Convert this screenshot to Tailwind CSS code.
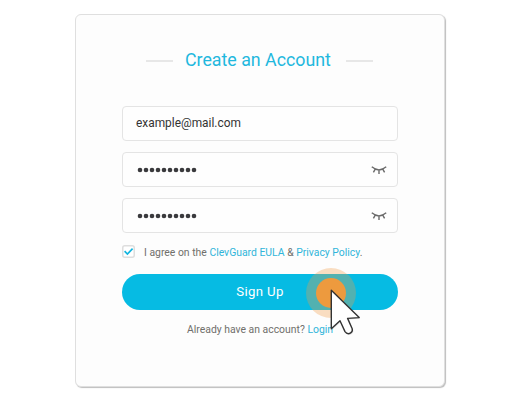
<!DOCTYPE html>
<html lang="en">
<head>
<meta charset="utf-8">
<title>Create an Account</title>
<script src="https://cdn.jsdelivr.net/npm/@tailwindcss/browser@4"></script>
</head>
<body class="bg-white w-[520px] h-[400px] overflow-hidden font-['Roboto',sans-serif]">
<main class="pt-[14px] pl-[75px]">
  <form class="relative w-[370px] h-[373px] rounded-[6px] border border-[#dfdfdf] bg-[#fdfdfd] shadow-[1px_1px_1px_0px_#bdbdbd] pl-[46px] pr-[46px] pt-[32px]">
    <div class="flex items-center h-[26px] pl-[24px]">
      <span class="w-[27px] h-[2px] bg-[#e7e7e7] mt-[2px]"></span>
      <h1 class="ml-[12px] text-[17.8px] leading-[26px] text-[#1fb8de] w-[146px] whitespace-nowrap">Create an Account</h1>
      <span class="ml-[15px] w-[27px] h-[2px] bg-[#e7e7e7] mt-[2px]"></span>
    </div>
    <div class="mt-[33px] flex flex-col gap-[11px]">
      <div class="h-[35px] rounded-[4px] border-[1.5px] border-[#e4e4e4] bg-[#fefefe] flex items-center pl-[13px] pb-px text-[11.9px] leading-[18px] text-[#333]">example@mail.com</div>
      <div class="h-[35px] rounded-[4px] border-[1.5px] border-[#e4e4e4] bg-[#fefefe] flex items-center justify-between pl-[14px] pr-[10px]">
        <svg width="60" height="6" viewBox="0 0 60 6" fill="#3a3a3d"><circle cx="3" cy="3" r="2.3"/><circle cx="9" cy="3" r="2.3"/><circle cx="15" cy="3" r="2.3"/><circle cx="21" cy="3" r="2.3"/><circle cx="27" cy="3" r="2.3"/><circle cx="33" cy="3" r="2.3"/><circle cx="39" cy="3" r="2.3"/><circle cx="45" cy="3" r="2.3"/><circle cx="51" cy="3" r="2.3"/><circle cx="57" cy="3" r="2.3"/></svg>
        <svg width="16" height="10" viewBox="0 0 16 10" fill="none" stroke="#6a6a6a" stroke-width="1.4"><path d="M.8 1.8Q8 8 15.2 1.8M4.1 4.3L2.4 7.3M11.9 4.3L13.6 7.3M8 5V9"/></svg>
      </div>
      <div class="h-[35px] rounded-[4px] border-[1.5px] border-[#e4e4e4] bg-[#fefefe] flex items-center justify-between pl-[14px] pr-[10px]">
        <svg width="60" height="6" viewBox="0 0 60 6" fill="#3a3a3d"><circle cx="3" cy="3" r="2.3"/><circle cx="9" cy="3" r="2.3"/><circle cx="15" cy="3" r="2.3"/><circle cx="21" cy="3" r="2.3"/><circle cx="27" cy="3" r="2.3"/><circle cx="33" cy="3" r="2.3"/><circle cx="39" cy="3" r="2.3"/><circle cx="45" cy="3" r="2.3"/><circle cx="51" cy="3" r="2.3"/><circle cx="57" cy="3" r="2.3"/></svg>
        <svg width="16" height="10" viewBox="0 0 16 10" fill="none" stroke="#6a6a6a" stroke-width="1.4"><path d="M.8 1.8Q8 8 15.2 1.8M4.1 4.3L2.4 7.3M11.9 4.3L13.6 7.3M8 5V9"/></svg>
      </div>
    </div>
    <div class="mt-[12px] h-[14px] flex items-center">
      <svg class="-mt-[1px]" width="13" height="13" viewBox="0 0 13 13" fill="none"><rect x=".75" y=".75" width="11.5" height="11.5" rx="2" fill="#fff" stroke="#dedede" stroke-width="1.5"/><path d="M2.6 6.2L5.4 9L10.6 3.6" stroke="#14b5df" stroke-width="1.7"/></svg>
      <p class="ml-[9px] mt-[2px] text-[10.4px] leading-[14px] text-[#706f6b] whitespace-nowrap">I agree on the <span class="text-[#30b5da]">ClevGuard EULA</span> &amp; <span class="text-[#30b5da]">Privacy Policy</span>.</p>
    </div>
    <button type="button" class="mt-[15px] block w-[276px] h-[36px] rounded-full bg-[#06bbe3] text-white text-[13.2px] tracking-[0.35px] leading-[36px]">Sign Up</button>
    <p class="mt-[13px] text-center text-[10.4px] leading-[14px] text-[#706f6b] whitespace-nowrap">Already have an account? <span class="text-[#30b5da]">Login</span></p>
    <svg class="absolute left-[229px] top-[252px]" width="58" height="74" viewBox="305 267 58 74">
      <circle cx="331" cy="293" r="25" fill="#f39b43" fill-opacity=".32"/>
      <circle cx="331" cy="293" r="15" fill="#ed9a3e"/>
      <path d="M331.3 290.2V328.8L340 320.8L345 331.6Q347.2 334.8 350.3 333.2Q353 331.8 352.2 328.8L347.6 318.4L359.2 317.6Z" fill="#aaa" opacity=".35" transform="translate(1 1)"/>
      <path d="M331.3 290.2V328.8L340 320.8L345 331.6Q347.2 334.8 350.3 333.2Q353 331.8 352.2 328.8L347.6 318.4L359.2 317.6Z" fill="#fff" stroke="#333" stroke-width="1.4" stroke-linejoin="round"/>
    </svg>
  </form>
</main>
</body>
</html>
